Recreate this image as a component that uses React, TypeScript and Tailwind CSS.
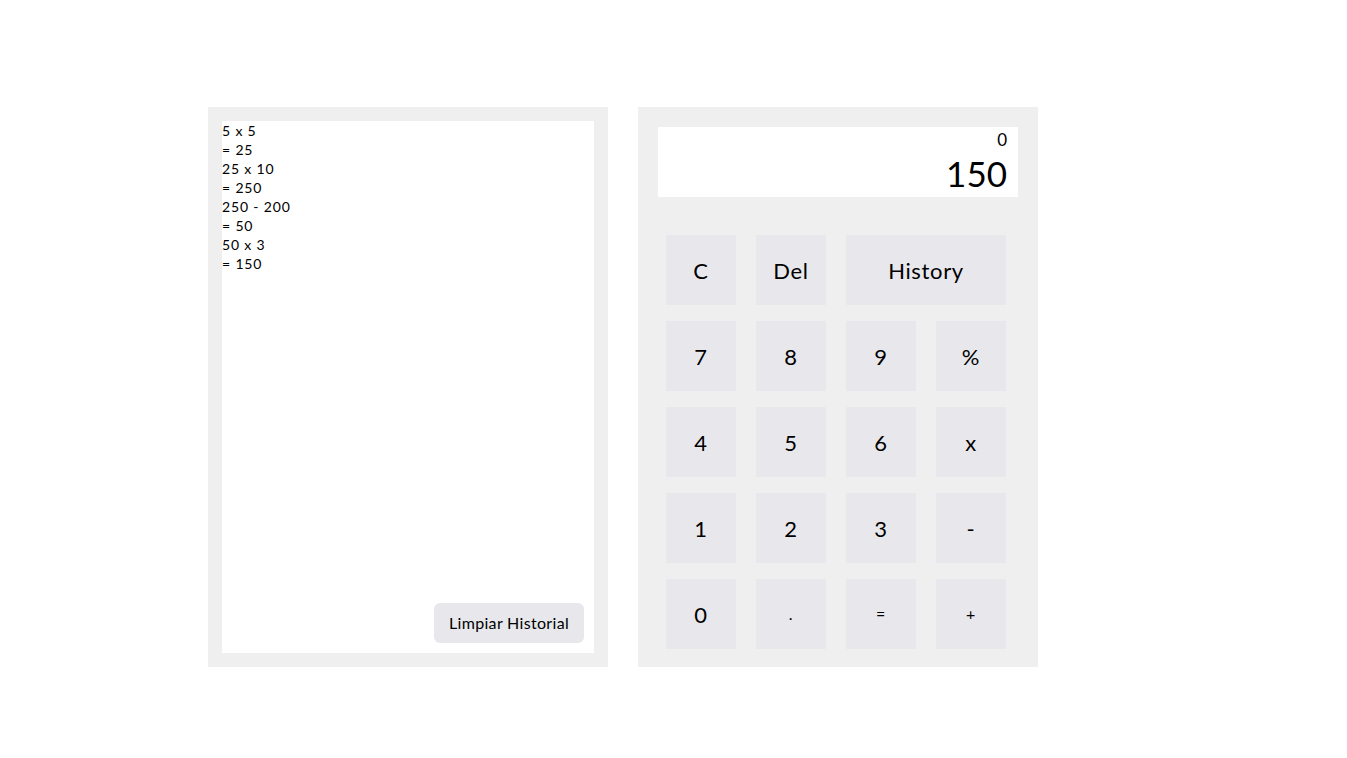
import React from 'react';

const history = ['5 x 5', '= 25', '25 x 10', '= 250', '250 - 200', '= 50', '50 x 3', '= 150'];

const Key: React.FC<{ label: string; wide?: boolean; small?: boolean }> = ({ label, wide, small }) => (
    <button
        className={`h-[70px] ${wide ? 'col-span-2' : ''} bg-[#e8e8ec] flex items-center justify-center text-black tracking-[0.03em] ${
            small ? 'text-[16px]' : 'text-[22px]'
        }`}
    >
        {label}
    </button>
);

const App: React.FC = () => {
    const keys: { label: string; wide?: boolean; small?: boolean }[] = [
        { label: 'C' },
        { label: 'Del' },
        { label: 'History', wide: true },
        { label: '7' },
        { label: '8' },
        { label: '9' },
        { label: '%' },
        { label: '4' },
        { label: '5' },
        { label: '6' },
        { label: 'x' },
        { label: '1' },
        { label: '2' },
        { label: '3' },
        { label: '-' },
        { label: '0' },
        { label: '.', small: true },
        { label: '=', small: true },
        { label: '+', small: true },
    ];

    return (
        <div className="min-h-screen bg-white pt-[107px] pl-[208px] font-['Lato','Liberation_Sans',sans-serif] text-black">
            <div className="flex gap-[30px]">
                {/* history panel */}
                <div className="w-[400px] h-[560px] bg-[#efefef] p-[14px]">
                    <div className="h-full bg-white flex flex-col">
                        <div className="flex-1 text-[14px] leading-[19px] tracking-[0.06em]">
                            {history.map((line, i) => (
                                <div key={i}>{line}</div>
                            ))}
                        </div>
                        <div className="flex justify-end pr-[10px] pb-[10px]">
                            <button className="w-[150px] h-[40px] rounded-[6px] bg-[#e8e8ec] text-[16px] tracking-[0.02em]">
                                Limpiar Historial
                            </button>
                        </div>
                    </div>
                </div>

                {/* calculator */}
                <div className="w-[400px] h-[560px] bg-[#efefef] pt-[20px] px-[20px]">
                    <div className="h-[70px] bg-white flex flex-col items-end pr-[11px]">
                        <div className="text-[17px] leading-[20px] mt-[3px]">0</div>
                        <div className="text-[35px] leading-[40px] mt-[3px]">150</div>
                    </div>
                    <div className="mt-[38px] ml-[8px] grid grid-cols-[repeat(4,70px)] gap-x-[20px] gap-y-[16px]">
                        {keys.map((k) => (
                            <Key key={k.label} label={k.label} wide={k.wide} small={k.small} />
                        ))}
                    </div>
                </div>
            </div>
        </div>
    );
};

export default App;
